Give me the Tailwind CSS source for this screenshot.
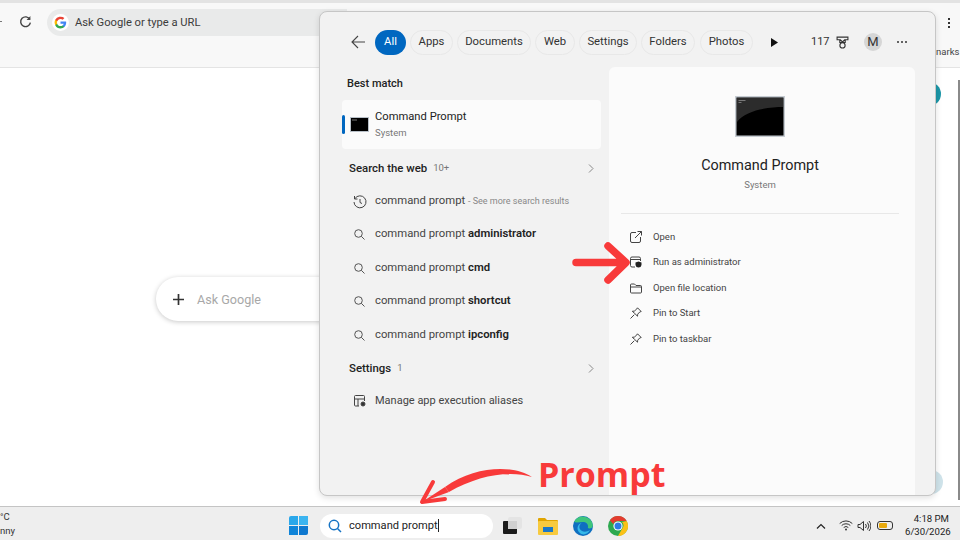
<!DOCTYPE html>
<html lang="en">
<head>
  <title>Command Prompt search</title>
  <meta charset="UTF-8">
  <script src="https://cdn.jsdelivr.net/npm/@tailwindcss/browser@4"></script>
</head>
<body class="relative w-[960px] h-[540px] overflow-hidden bg-white flex flex-col font-['Roboto','Noto_Sans',sans-serif] text-[#1f1f1f]">

  <!-- Chrome toolbar -->
  <header class="h-[68px] shrink-0 bg-[#f8f8f8] border-b border-[#e4e4e4] flex flex-col">
    <div class="h-[3px] bg-[#e3e3e3]"></div>
    <div class="flex items-start pt-[6px] pl-[19px] relative">
      <svg class="absolute left-0 top-[17px] w-[2px] h-[3px]" viewBox="0 0 2 3"><path d="M0 1h2v1H0z" fill="#777"/></svg>
      <svg class="w-[13px] h-[13px] mt-[6px]" viewBox="0 0 24 24" fill="none" stroke="#444" stroke-width="2.6"><path d="M20 8a9 9 0 1 0 1 6"/><path d="M21 2v7h-7" fill="#444" stroke="none"/></svg>
      <div class="ml-[15px] w-[300px] h-[27px] rounded-l-full bg-[#e9eaea] flex items-center pl-[5px]">
        <div class="w-[17px] h-[17px] rounded-full bg-white flex items-center justify-center">
          <svg class="w-[13px] h-[13px]" viewBox="0 0 24 24"><path fill="#4285F4" d="M22.5 12.2c0-.8-.1-1.500-.2-2.200H12v4.200h5.900a5 5 0 0 1-2.200 3.300v2.700h3.500c2.100-1.900 3.300-4.700 3.300-8z"/><path fill="#34A853" d="M12 23c3 0 5.400-1 7.200-2.700l-3.500-2.700c-1 .7-2.200 1-3.700 1-2.800 0-5.200-1.900-6.100-4.500H2.300V16.900A11 11 0 0 0 12 23z"/><path fill="#FBBC05" d="M5.900 14.100a6.600 6.600 0 0 1 0-4.200V7.100H2.300a11 11 0 0 0 0 9.800z"/><path fill="#EA4335" d="M12 5.400c1.600 0 3 .5 4.100 1.600l3.100-3.100A11 11 0 0 0 2.300 7.100l3.600 2.800C6.800 7.300 9.200 5.400 12 5.400z"/></svg>
        </div>
        <span class="ml-[6px] mt-[1px] text-[11.200px] text-[#3c3c3c]">Ask Google or type a URL</span>
      </div>
    </div>
  </header>

  <!-- New tab page -->
  <main class="flex-1 bg-white">
    <div class="mt-[209px] ml-[156px] w-[200px] h-[44px] rounded-l-full bg-white shadow-[0_1px_5px_rgba(0,0,0,0.22)] flex items-center pl-[16px]">
      <svg class="w-[13px] h-[13px]" viewBox="0 0 13 13" stroke="#333" stroke-width="1.700"><path d="M6.500 1v11M1 6.500h11"/></svg>
      <span class="ml-[12px] mt-[2px] text-[12.600px] text-[#a8a8a8]">Ask Google</span>
    </div>
  </main>

  <!-- Taskbar -->
  <footer class="h-[34px] shrink-0 bg-[#eeeeee] border-t border-[#c4c4c4] flex items-center pt-[4px] relative">
    <div class="w-[17px] text-[9.500px] leading-[14px] text-[#333] overflow-hidden whitespace-nowrap flex flex-col -mt-[3px]">
      <span>°C</span>
      <span>nny</span>
    </div>
    <div class="ml-[272px] grid grid-cols-2 gap-[1px] w-[19px] h-[19px]">
      <div class="bg-[#2aa7ea] rounded-tl-[2px]"></div><div class="bg-[#3bb4f0]"></div>
      <div class="bg-[#1084d8]"></div><div class="bg-[#0f78cf] rounded-br-[2px]"></div>
    </div>
    <div class="ml-[12px] w-[173px] h-[24px] rounded-full bg-white flex items-center pl-[8px]">
      <svg class="w-[14px] h-[14px]" viewBox="0 0 14 14" fill="none" stroke="#1673c4" stroke-width="1.500"><circle cx="6" cy="6" r="4.700"/><path d="M9.500 9.500L13 13"/></svg>
      <span class="ml-[7px] mt-[1px] text-[11.100px] text-[#222]">command prompt</span>
      <span class="w-px h-[13px] bg-[#222]"></span>
    </div>
    <!-- task view -->
    <div class="ml-[10px] relative w-[19px] h-[17px]">
      <div class="absolute left-[5px] top-0 w-[14px] h-[12px] bg-[#e4e4e4] rounded-[2px]"></div>
      <div class="absolute left-0 top-[4px] w-[14px] h-[13px] bg-[#1c1c1c] rounded-[1px]"></div>
      <div class="absolute left-[5px] top-[4px] w-[9px] h-[8px] bg-[#d0d0d0]"></div>
    </div>
    <!-- explorer -->
    <svg class="ml-[16px] w-[20px] h-[18px]" viewBox="0 0 20 18"><path d="M0 2a1 1 0 0 1 1-1h6l2 2h10a1 1 0 0 1 1 1v1H0z" fill="#e0a400"/><rect y="4" width="20" height="14" rx="1" fill="#f7ca3f"/><rect x="5" y="10" width="10" height="5" fill="#1a78c8"/></svg>
    <!-- edge -->
    <svg class="ml-[15px] w-[20px] h-[20px]" viewBox="0 0 20 20"><circle cx="10" cy="10" r="10" fill="#0f6fc0"/><path d="M1 6a10 10 0 0 1 18.800 3c.3 3-3 4-5 3 1-3-1-6-5-6-3 0-6 1-8.800 0z" fill="#3fc57b"/><path d="M9 7c-3 1-4 6 0 8 2 1 5 1 8-1-2 4-7 6-10 3-4-3-3-9 2-10z" fill="#35b8e8"/></svg>
    <!-- chrome -->
    <svg class="ml-[15px] w-[20px] h-[20px]" viewBox="0 0 20 20"><circle cx="10" cy="10" r="10" fill="#2da94f"/><path d="M10 0a10 10 0 0 1 8.700 5H10a5 5 0 0 0-4.700 3.300L1.800 4.300A10 10 0 0 1 10 0z" fill="#e33b2e"/><path d="M18.700 5A10 10 0 0 1 10 20l4.300-7.500A5 5 0 0 0 14 6z" fill="#fbc116"/><circle cx="10" cy="10" r="4.600" fill="#fff"/><circle cx="10" cy="10" r="3.500" fill="#2c7be5"/></svg>
    <!-- tray -->
    <svg class="ml-[188px] w-[10px] h-[6px]" viewBox="0 0 10 6" fill="none" stroke="#222" stroke-width="1.200"><path d="M1 5.500l4-4 4 4"/></svg>
    <svg class="ml-[13px] w-[14px] h-[11px]" viewBox="0 0 14 11" fill="none" stroke="#333" stroke-width="1"><path d="M.7 3.500a9 9 0 0 1 12.600 0M2.700 5.500a6.200 6.200 0 0 1 8.600 0M4.700 7.500a3.400 3.400 0 0 1 4.600 0"/><circle cx="7" cy="9.600" r="1" fill="#333" stroke="none"/></svg>
    <svg class="ml-[4px] w-[14px] h-[12px]" viewBox="0 0 14 12" fill="none" stroke="#333" stroke-width="1"><path d="M1 4.500h2L6.500 1.500v9L3 7.500H1zM8.500 4a3 3 0 0 1 0 4M10.500 2.500a5.500 5.500 0 0 1 0 7M12 1a7.500 7.500 0 0 1 0 10"/></svg>
    <div class="ml-[6px] w-[16px] h-[9px] rounded-[3px] border border-[#333] p-px"><div class="w-[8px] h-full bg-[#e8a90c] rounded-[1px]"></div></div>
    <div class="ml-[12px] w-[44px] text-right text-[9.600px] leading-[13px] text-[#222] -mt-[2px]">
      <div>4:18 PM</div>
      <div class="whitespace-nowrap">6/30/2026</div>
    </div>
  </footer>

  <!-- Scrollbar and leftovers behind the search panel -->
  <span class="absolute left-[936px] top-[45px] text-[9.500px] text-[#444]">narks</span>
  <div class="absolute left-[917px] top-[82px] w-[24px] h-[24px] rounded-full bg-[#1c97a8]"></div>
  <div class="absolute left-[915px] top-[470px] w-[28px] h-[24px] rounded-full bg-[#cfe3ea]"></div>
  <div class="absolute left-[948px] top-[18px] flex flex-col gap-[2px]">
    <span class="w-[2px] h-[2px] bg-[#333]"></span><span class="w-[2px] h-[2px] bg-[#333]"></span><span class="w-[2px] h-[2px] bg-[#333]"></span>
  </div>
  <div class="absolute left-[958px] top-[80px] bottom-[40px] w-[2px] bg-[#8a8a8a]"></div>

  <!-- Windows search panel -->
  <section class="absolute left-[319px] top-[11px] w-[617px] h-[485px] rounded-[8px] bg-[#f2f2f2] border border-[#c6c6c6] flex flex-col shadow-[0_2px_6px_rgba(0,0,0,0.12)]">
    <!-- Filters -->
    <div class="h-[55px] shrink-0 flex items-center pt-[5px] pl-[31px] text-[11.300px] text-[#333]">
      <svg class="w-[15px] h-[14px]" viewBox="0 0 15 14" fill="none" stroke="#444" stroke-width="1.100"><path d="M14 7H1M7 1L1 7l6 6"/></svg>
      <span class="ml-[9px] w-[31px] h-[25px] pt-[1px] rounded-full bg-[#0067c0] text-white flex items-center justify-center">All</span>
      <span class="ml-[4px] w-[43px] h-[25px] pt-[1px] rounded-full border border-[#e8e8e8] flex items-center justify-center">Apps</span>
      <span class="ml-[4px] w-[74px] h-[25px] pt-[1px] rounded-full border border-[#e8e8e8] flex items-center justify-center">Documents</span>
      <span class="ml-[4px] w-[40px] h-[25px] pt-[1px] rounded-full border border-[#e8e8e8] flex items-center justify-center">Web</span>
      <span class="ml-[4px] w-[58px] h-[25px] pt-[1px] rounded-full border border-[#e8e8e8] flex items-center justify-center">Settings</span>
      <span class="ml-[4px] w-[54px] h-[25px] pt-[1px] rounded-full border border-[#e8e8e8] flex items-center justify-center">Folders</span>
      <span class="ml-[5px] w-[53px] h-[25px] pt-[1px] rounded-full border border-[#e8e8e8] flex items-center justify-center">Photos</span>
      <svg class="ml-[18px] w-[7px] h-[9px]" viewBox="0 0 7 9"><path d="M0 0l7 4.500L0 9z" fill="#111"/></svg>
      <span class="ml-[33px] mt-[1px] w-[17px] text-[11px]">117</span>
      <svg class="ml-[8px] w-[13px] h-[13px]" viewBox="0 0 12 12" fill="none" stroke="#333" stroke-width="1"><path d="M1 1h10v2.500H8L6 5.500 4 3.500H1zM3.500 3.500V6h5V3.500"/><circle cx="6" cy="8.700" r="2.400"/></svg>
      <span class="ml-[15px] w-[18px] h-[18px] rounded-full bg-[#d6d6d6] flex items-center justify-center text-[13px]">M</span>
      <span class="ml-[15px] flex gap-[2px]"><i class="w-[2px] h-[2px] rounded-full bg-[#333]"></i><i class="w-[2px] h-[2px] rounded-full bg-[#333]"></i><i class="w-[2px] h-[2px] rounded-full bg-[#333]"></i></span>
    </div>

    <div class="flex-1 flex pl-[22px]">
      <!-- Results -->
      <div class="w-[259px] shrink-0 flex flex-col text-[11.300px]">
        <h2 class="mt-[2px] ml-[5px] h-[31px] font-medium text-[11px] leading-[30px] text-[#222]">Best match</h2>
        <div class="h-[49px] bg-[#fbfbfb] rounded-[4px] flex items-center relative">
          <span class="absolute left-0 top-[15px] w-[3px] h-[19px] rounded-full bg-[#0067c0]"></span>
          <svg class="ml-[8px] w-[19px] h-[15px]" viewBox="0 0 19 15"><rect x=".5" y=".5" width="18" height="14" fill="#000" stroke="#b8c0c8"/><path d="M2 3h5" stroke="#aaa" stroke-width=".7"/></svg>
          <div class="ml-[6px] flex flex-col">
            <span class="text-[11.200px] leading-[16px] text-[#222]">Command Prompt</span>
            <span class="text-[9.500px] leading-[15px] text-[#777]">System</span>
          </div>
        </div>
        <div class="h-[37px] flex items-center pl-[7px] pr-[7px] font-medium text-[11.400px] text-[#222] mt-[1px]">
          <span>Search the web</span><span class="ml-[6px] text-[9.500px] font-normal text-[#777]">10+</span>
          <svg class="ml-auto w-[6px] h-[9px]" viewBox="0 0 6 9" fill="none" stroke="#888"><path d="M1 .5l4 4-4 4"/></svg>
        </div>
        <div class="h-[33px] flex items-center pl-[11px] gap-[8px] text-[#444] whitespace-nowrap -mt-[2px]">
          <svg class="w-[14px] h-[14px]" viewBox="0 0 14 14" fill="none" stroke="#444"><path d="M2 3.500A6 6 0 1 1 1 7M1.500 1v3h3M7 4v3.500l2 1"/></svg>
          <span>command prompt <span class="text-[9px] text-[#888]">- See more search results</span></span>
        </div>
        <div class="h-[33.500px] flex items-center pl-[12px] gap-[10px] text-[#444] whitespace-nowrap">
          <svg class="w-[11px] h-[11px]" viewBox="0 0 11 11" fill="none" stroke="#555"><circle cx="4.500" cy="4.500" r="3.800"/><path d="M7.300 7.300L10.500 10.500"/></svg>
          <span>command prompt <b class="font-semibold text-[#222]">administrator</b></span>
        </div>
        <div class="h-[33.500px] flex items-center pl-[12px] gap-[10px] text-[#444] whitespace-nowrap">
          <svg class="w-[11px] h-[11px]" viewBox="0 0 11 11" fill="none" stroke="#555"><circle cx="4.500" cy="4.500" r="3.800"/><path d="M7.300 7.300L10.500 10.500"/></svg>
          <span>command prompt <b class="font-semibold text-[#222]">cmd</b></span>
        </div>
        <div class="h-[33.500px] flex items-center pl-[12px] gap-[10px] text-[#444] whitespace-nowrap">
          <svg class="w-[11px] h-[11px]" viewBox="0 0 11 11" fill="none" stroke="#555"><circle cx="4.500" cy="4.500" r="3.800"/><path d="M7.300 7.300L10.500 10.500"/></svg>
          <span>command prompt <b class="font-semibold text-[#222]">shortcut</b></span>
        </div>
        <div class="h-[33.500px] flex items-center pl-[12px] gap-[10px] text-[#444] whitespace-nowrap">
          <svg class="w-[11px] h-[11px]" viewBox="0 0 11 11" fill="none" stroke="#555"><circle cx="4.500" cy="4.500" r="3.800"/><path d="M7.300 7.300L10.500 10.500"/></svg>
          <span>command prompt <b class="font-semibold text-[#222]">ipconfig</b></span>
        </div>
        <div class="h-[33px] flex items-center pl-[7px] pr-[7px] font-medium text-[11.400px] text-[#222]">
          <span>Settings</span><span class="ml-[6px] text-[9.500px] font-normal text-[#777]">1</span>
          <svg class="ml-auto w-[6px] h-[9px]" viewBox="0 0 6 9" fill="none" stroke="#888"><path d="M1 .5l4 4-4 4"/></svg>
        </div>
        <div class="h-[32px] flex items-center pl-[12px] gap-[9px] text-[11px] text-[#444]">
          <svg class="w-[12px] h-[12px]" viewBox="0 0 12 12" fill="none" stroke="#444"><path d="M5 11H1.500a1 1 0 0 1-1-1V1.500a1 1 0 0 1 1-1h8a1 1 0 0 1 1 1V6M.5 4h10M4 4v7"/><circle cx="9" cy="9" r="2" fill="#333"/></svg>
          <span>Manage app execution aliases</span>
        </div>
      </div>

      <!-- Preview -->
      <div class="ml-[8px] w-[306px] h-[428px] bg-[#fbfbfb] rounded-t-[6px] flex flex-col">
        <svg class="mt-[29px] ml-[126px] w-[50px] h-[41px]" viewBox="0 0 50 41">
          <rect x=".75" y=".75" width="48.500" height="39.500" fill="#000" stroke="#c6ccd2" stroke-width="1.500"/>
          <path d="M2 2h46v9C34 11 10 14 2 26z" fill="#2c2c2c"/>
          <path d="M3.500 4.500h7M3.500 6.500h3" stroke="#999" stroke-width=".7"/>
        </svg>
        <h1 class="mt-[19px] w-[302px] text-center text-[14.400px] leading-[20px] text-[#222]">Command Prompt</h1>
        <p class="mt-[2px] w-[302px] text-center text-[9.500px] leading-[14px] text-[#777]">System</p>
        <div class="mt-[21px] ml-[12px] w-[278px] border-t border-[#e8e8e8]"></div>
        <ul class="mt-[10px] w-full pl-[21px] text-[9.500px] text-[#444]">
          <li class="h-[25.500px] flex items-center gap-[11px]">
            <svg class="w-[12px] h-[12px]" viewBox="0 0 12 12" fill="none" stroke="#444"><path d="M6 1.500H2a1.500 1.500 0 0 0-1.500 1.500v7A1.500 1.500 0 0 0 2 11.500h7a1.500 1.500 0 0 0 1.500-1.500V6M5 7l6.500-6.500M7.500.5h4v4"/></svg>
            Open
          </li>
          <li class="h-[25.500px] flex items-center gap-[11px]">
            <svg class="w-[12px] h-[12px]" viewBox="0 0 12 12" fill="none" stroke="#444"><path d="M5 11H2a1.500 1.500 0 0 1-1.500-1.500v-7A1.500 1.500 0 0 1 2 1h7a1.500 1.500 0 0 1 1.500 1.500V5M.5 3.500h10"/><path d="M8.500 5.500l3 1v2.500a3 3 0 0 1-3 2.500 3 3 0 0 1-3-2.500V6.500z" fill="#222" stroke="none"/></svg>
            Run as administrator
          </li>
          <li class="h-[25.500px] flex items-center gap-[11px]">
            <svg class="w-[12px] h-[12px]" viewBox="0 0 12 12" fill="none" stroke="#444"><path d="M.5 3a1 1 0 0 1 1-1h3l1.500 1.500h4.500a1 1 0 0 1 1 1v5.500a1 1 0 0 1-1 1h-9a1 1 0 0 1-1-1zM.5 5h11"/></svg>
            Open file location
          </li>
          <li class="h-[25.500px] flex items-center gap-[11px]">
            <svg class="w-[12px] h-[12px]" viewBox="0 0 12 12" fill="none" stroke="#444"><path d="M7.500.8l3.700 3.700-1.500.5-2 2.200-.2 2L4.800 6.500 2.300 4.300l2-.2 2.400-2zM4.300 7.700L.5 11.500"/></svg>
            Pin to Start
          </li>
          <li class="h-[25.500px] flex items-center gap-[11px]">
            <svg class="w-[12px] h-[12px]" viewBox="0 0 12 12" fill="none" stroke="#444"><path d="M7.500.8l3.700 3.700-1.500.5-2 2.200-.2 2L4.800 6.500 2.300 4.300l2-.2 2.400-2zM4.300 7.700L.5 11.500"/></svg>
            Pin to taskbar
          </li>
        </ul>
      </div>
    </div>
  </section>

  <!-- Red annotations -->
  <svg class="absolute left-[570px] top-[240px] w-[62px] h-[46px]" viewBox="0 0 62 46" fill="none" stroke="#f83a3a" stroke-width="7.500" stroke-linecap="round" stroke-linejoin="round"><path d="M6 22.500h48M38 6l18 16.500L38 40"/></svg>
  <svg class="absolute left-[418px] top-[460px] w-[116px] h-[46px]" viewBox="0 0 116 46"><path d="M114 17C96 5 58 5 27 27L31 32C60 15 92 10 114 17z" fill="#f83a3a"/><path d="M15 22L4 42l23-3" fill="none" stroke="#f83a3a" stroke-width="4" stroke-linecap="round" stroke-linejoin="round"/><path d="M4 42L27 27l4 5z" fill="#f83a3a"/></svg>
  <span class="absolute left-[538px] top-[451px] text-[34px] leading-[46px] font-bold text-[#f83a3a] font-['Open_Sans',sans-serif]">Prompt</span>
</body>
</html>
